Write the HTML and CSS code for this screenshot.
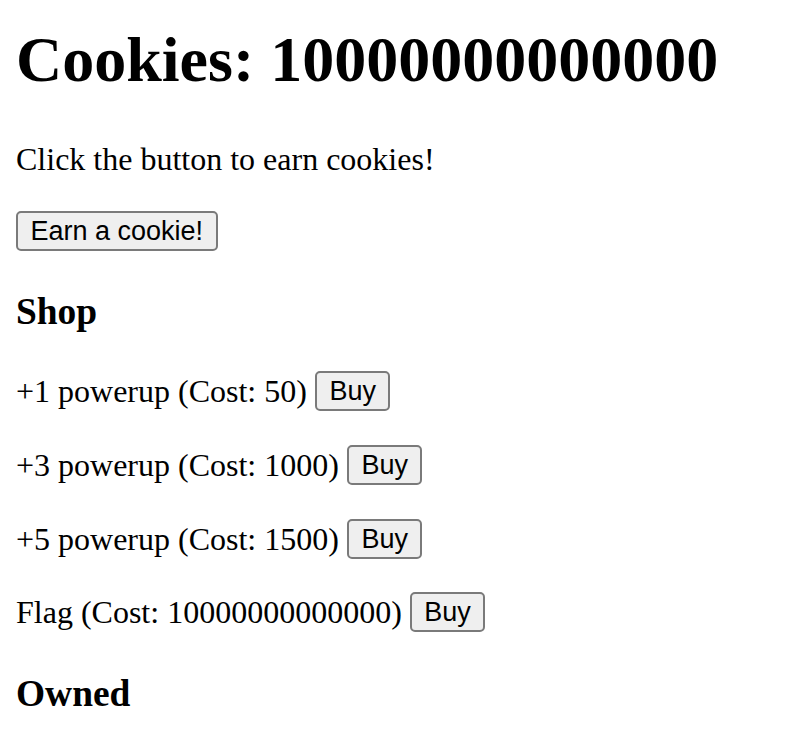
FILE: index.html
```html
<!DOCTYPE html>
<html>
<head>
<meta charset="utf-8">
<title>Cookie Clicker</title>
<link rel="stylesheet" href="styles.css">
</head>
<body>
<h1 class="title">Cookies: 10000000000000</h1>
<p class="intro">Click the button to earn cookies!</p>
<div class="earn-row"><button class="btn">Earn a cookie!</button></div>
<h3 class="section shop-title">Shop</h3>
<div class="item first">+1 powerup (Cost: 50)<button class="btn">Buy</button></div>
<div class="item">+3 powerup (Cost: 1000)<button class="btn">Buy</button></div>
<div class="item">+5 powerup (Cost: 1500)<button class="btn">Buy</button></div>
<div class="item last">Flag (Cost: 10000000000000)<button class="btn">Buy</button></div>
<h3 class="section owned-title">Owned</h3>
</body>
</html>
```

FILE: styles.css
```css
html, body {
  background: #ffffff;
}
body {
  margin: 0;
  padding: 0 16px;
  color: #000;
  font-family: "Liberation Serif", "Times New Roman", serif;
  font-size: 32px;
  overflow: hidden;
}
.title {
  margin: 23px 0 0;
  font-size: 64px;
  line-height: 74px;
  font-weight: bold;
  white-space: nowrap;
}
.intro {
  margin: 44px 0 0;
  line-height: 37px;
}
.earn-row {
  margin-top: 33px;
  display: flex;
}
.btn {
  font-family: "Liberation Sans", Arial, sans-serif;
  font-size: 27px;
  color: #000;
  height: 40px;
  padding: 0 12.5px;
  border: 2px solid #7a7a7a;
  border-radius: 5px;
  background: #efefef;
  line-height: 36px;
}
.section {
  font-size: 37.44px;
  line-height: 43px;
  font-weight: bold;
  margin: 0;
}
.shop-title {
  margin-top: 39px;
}
.item {
  display: flex;
  align-items: center;
  gap: 8px;
  line-height: 37px;
  margin-top: 34px;
  white-space: nowrap;
}
.item.first {
  margin-top: 38px;
}
.item.last {
  margin-top: 33px;
}
.owned-title {
  margin-top: 40px;
}
```
